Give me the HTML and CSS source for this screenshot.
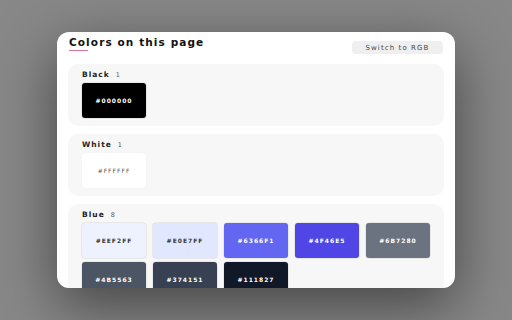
FILE: index.html
```html
<!DOCTYPE html>
<html>
<head>
<meta charset="utf-8">
<link rel="stylesheet" href="styles.css">
</head>
<body>
<div class="popup">
  <header class="header">
    <h1 class="title">Colors on this page</h1>
    <button class="switch">Switch to RGB</button>
  </header>
  <div class="groups">
    <section class="group">
      <div class="label">Black <span class="count">1</span></div>
      <div class="swatches">
        <div class="swatch dark" style="background:#000000">#000000</div>
      </div>
    </section>
    <section class="group">
      <div class="label">White <span class="count">1</span></div>
      <div class="swatches">
        <div class="swatch light white" style="background:#FFFFFF">#FFFFFF</div>
      </div>
    </section>
    <section class="group">
      <div class="label">Blue <span class="count">8</span></div>
      <div class="swatches">
        <div class="swatch light" style="background:#EEF2FF">#EEF2FF</div>
        <div class="swatch light" style="background:#E0E7FF">#E0E7FF</div>
        <div class="swatch dark" style="background:#6366F1">#6366F1</div>
        <div class="swatch dark" style="background:#4F46E5">#4F46E5</div>
        <div class="swatch dark" style="background:#6B7280">#6B7280</div>
        <div class="swatch dark" style="background:#4B5563">#4B5563</div>
        <div class="swatch dark" style="background:#374151">#374151</div>
        <div class="swatch dark" style="background:#111827">#111827</div>
      </div>
    </section>
  </div>
</div>
</body>
</html>
```
FILE: styles.css
```css
* { box-sizing: border-box; }
html, body { margin: 0; padding: 0; }
body {
  width: 512px;
  height: 320px;
  overflow: hidden;
  background: #888888;
  font-family: "DejaVu Sans", "Liberation Sans", sans-serif;
  padding: 32px 0 0 57px;
}
.popup {
  width: 398px;
  height: 256px;
  background: #ffffff;
  border-radius: 12px;
  overflow: hidden;
  padding: 0 11px;
  box-shadow: 0 18px 60px rgba(0, 0, 0, 0.5);
}
.header {
  height: 32px;
  padding-top: 4px;
  display: flex;
  justify-content: space-between;
  align-items: flex-start;
}
.title {
  margin: 0 0 0 1px;
  font-size: 10.5px;
  line-height: 12px;
  font-weight: bold;
  letter-spacing: 1.1px;
  color: #111;
  display: flex;
  flex-direction: column;
}
.title::after {
  content: "";
  display: block;
  width: 19px;
  height: 1px;
  margin-top: 1.5px;
  background: #d9759a;
}
.switch {
  margin: 5px 1px 0 0;
  width: 91px;
  height: 13px;
  padding: 0;
  border: none;
  border-radius: 4px;
  background: #efefef;
  font-family: inherit;
  font-size: 7px;
  letter-spacing: 1.1px;
  color: #444;
}
.groups {
  display: flex;
  flex-direction: column;
  gap: 8px;
}
.group {
  background: #f7f7f7;
  border-radius: 10px;
  padding: 6px 14px 8px;
}
.label {
  display: flex;
  align-items: baseline;
  height: 9px;
  font-size: 7.5px;
  line-height: 9px;
  font-weight: bold;
  letter-spacing: 1px;
  color: #222;
  margin-bottom: 4px;
}
.count {
  font-weight: normal;
  font-size: 6.5px;
  line-height: 9px;
  color: #555;
  margin-left: 6px;
}
.swatches {
  display: grid;
  grid-template-columns: repeat(5, 64px);
  gap: 4px 7px;
}
.swatch {
  height: 35px;
  border-radius: 3px;
  display: flex;
  align-items: center;
  justify-content: center;
  font-size: 6px;
  font-weight: bold;
  letter-spacing: 1px;
  box-shadow: 0 0 0 0.5px rgba(0, 0, 0, 0.12);
}
.swatch.dark { color: #ffffff; }
.swatch.light { color: #3a3a3a; }
.swatch.white { font-weight: normal; color: #555; box-shadow: 0 0 1px rgba(0, 0, 0, 0.08); }
```
